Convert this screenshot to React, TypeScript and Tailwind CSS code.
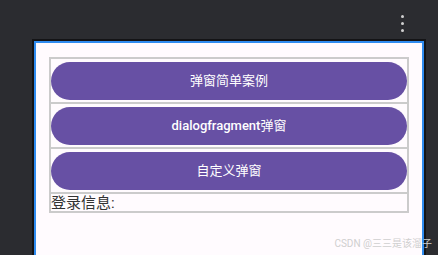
import React from "react";

const rows: { latin?: string; cjk: string }[] = [
  { cjk: "弹窗简单案例" },
  { latin: "dialogfragment", cjk: "弹窗" },
  { cjk: "自定义弹窗" },
];

export default function App() {
  return (
    <div
      className="relative w-[438px] h-[255px] overflow-hidden bg-[#2b2c30] flex flex-col"
      style={{ fontFamily: "Roboto, 'Noto Sans CJK SC', sans-serif" }}
    >
      <header className="h-[39px] shrink-0 flex justify-end pt-[15px] pr-[34px]">
        <div className="flex flex-col gap-[4px]">
          <span className="w-[3px] h-[3px] rounded-full bg-[#d0d0d0]" />
          <span className="w-[3px] h-[3px] rounded-full bg-[#d0d0d0]" />
          <span className="w-[3px] h-[3px] rounded-full bg-[#d0d0d0]" />
        </div>
      </header>

      <div className="ml-[32px] w-[394px] flex-1 border-2 border-b-0 border-[#141416]">
        <div className="h-full border-2 border-b-0 border-[#2f8cf0] bg-[#fffbfe] px-[13px] pt-[14px]">
          <div className="border-2 border-[#cbcbcb] flex flex-col">
            {rows.map((row) => (
              <div key={row.cjk + (row.latin ?? "")} className="pt-[3px] pb-[2px] border-b-2 border-[#cbcbcb]">
                <button className="w-full h-[38px] rounded-full bg-[#6750a4] text-white text-[13px] flex items-center justify-center">
                  {row.latin && <span className="font-medium">{row.latin}</span>}
                  {row.cjk}
                </button>
              </div>
            ))}
            <div className="h-[17px] text-[15px] leading-[19px] text-[#333]">登录信息:</div>
          </div>
        </div>
      </div>

      <span className="absolute right-[6px] bottom-[4px] text-[10px] text-[#cfcfcf]">
        CSDN @三三是该溜子
      </span>
    </div>
  );
}
